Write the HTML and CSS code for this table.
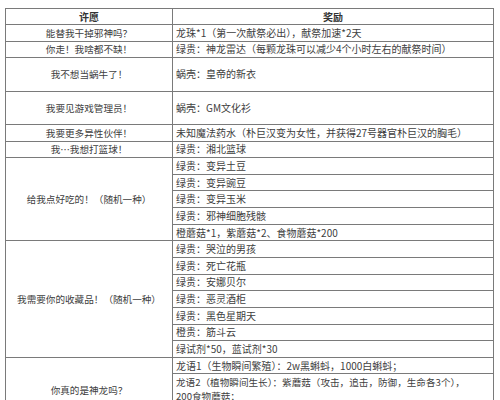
FILE: index.html
```html
<!DOCTYPE html>
<html lang="zh-CN">
<head>
<meta charset="utf-8">
<title>许愿奖励</title>
<link rel="stylesheet" href="styles.css">
</head>
<body>
<div class="wrap">
<table class="wish">
  <colgroup><col class="c-wish"><col class="c-reward"></colgroup>
  <thead>
    <tr class="head"><th>许愿</th><th>奖励</th></tr>
  </thead>
  <tbody>
    <tr><td class="w">能替我干掉邪神吗？</td><td class="r">龙珠*1（第一次献祭必出），献祭加速*2天</td></tr>
    <tr><td class="w">你走！我啥都不缺！</td><td class="r">绿贵：神龙雷达（每颗龙珠可以减少4个小时左右的献祭时间）</td></tr>
    <tr class="tall"><td class="w">我不想当蜗牛了！</td><td class="r">蜗壳：皇帝的新衣</td></tr>
    <tr class="tall"><td class="w">我要见游戏管理员！</td><td class="r">蜗壳：GM文化衫</td></tr>
    <tr><td class="w">我要更多异性伙伴！</td><td class="r">未知魔法药水（朴巨汉变为女性，并获得27号器官朴巨汉的胸毛）</td></tr>
    <tr><td class="w">我…我想打篮球！</td><td class="r">绿贵：湘北篮球</td></tr>
    <tr><td class="w" rowspan="5">给我点好吃的！（随机一种）</td><td class="r">绿贵：变异土豆</td></tr>
    <tr><td class="r">绿贵：变异豌豆</td></tr>
    <tr><td class="r">绿贵：变异玉米</td></tr>
    <tr><td class="r">绿贵：邪神细胞残骸</td></tr>
    <tr><td class="r">橙蘑菇*1，紫蘑菇*2、食物蘑菇*200</td></tr>
    <tr><td class="w" rowspan="7">我需要你的收藏品！（随机一种）</td><td class="r">绿贵：哭泣的男孩</td></tr>
    <tr><td class="r">绿贵：死亡花瓶</td></tr>
    <tr><td class="r">绿贵：安娜贝尔</td></tr>
    <tr><td class="r">绿贵：恶灵酒柜</td></tr>
    <tr><td class="r">绿贵：黑色星期天</td></tr>
    <tr><td class="r">橙贵：筋斗云</td></tr>
    <tr><td class="r">绿试剂*50，蓝试剂*30</td></tr>
    <tr><td class="w dragon" rowspan="2">你真的是神龙吗？</td><td class="r">龙语1（生物瞬间繁殖）：2w黑蝌蚪，1000白蝌蚪；</td></tr>
    <tr class="multi"><td class="r nowrap">龙语2（植物瞬间生长）：紫蘑菇（攻击，追击，防御，生命各3个），<br>200食物蘑菇；</td></tr>
  </tbody>
</table>
</div>
</body>
</html>
```
FILE: styles.css
```css
html, body {
  margin: 0;
  padding: 0;
  background: #ffffff;
}

.wrap {
  padding: 8px 0 0 5px;
}

.wish {
  border-collapse: collapse;
  width: 489px;
  table-layout: fixed;
  font-family: "Noto Sans CJK SC", "Noto Sans", sans-serif;
  font-size: 9.6px;
  color: #404040;
}

.c-wish { width: 167px; }

.wish th,
.wish td {
  border: 1px solid #7a7a7a;
  line-height: 14px;
  padding: 0 3px;
  vertical-align: middle;
}

.wish tr { height: 16.65px; }
.wish tr.head { height: 16px; }
.wish tr.tall { height: 33.3px; }

.wish th {
  font-weight: bold;
  font-size: 10px;
  color: #333333;
  text-align: center;
}

.wish td.w { text-align: center; }
.wish td.r { text-align: left; font-size: 10px; }

.wish td.dragon { padding-top: 18px; }

.wish tr.multi td { padding-top: 1px; padding-bottom: 1px; font-size: 9.6px; }

.nowrap { white-space: nowrap; }
```
